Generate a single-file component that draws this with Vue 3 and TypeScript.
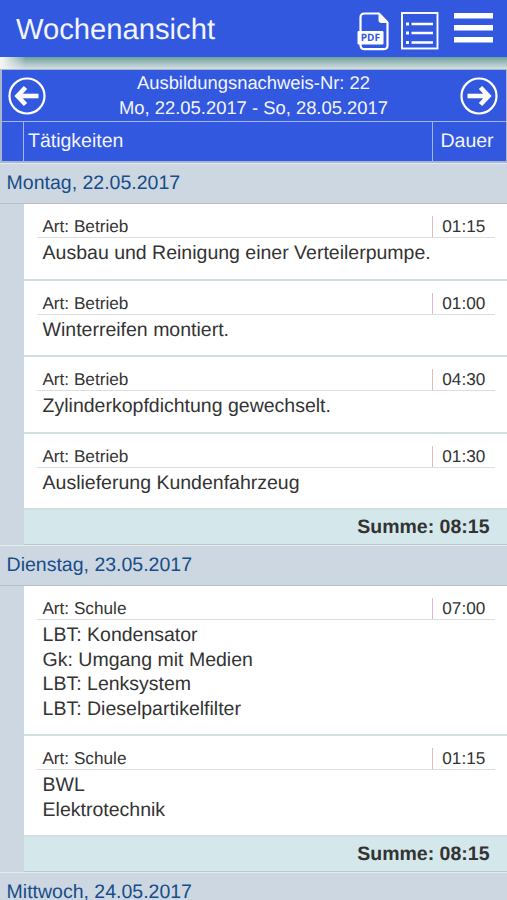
<script setup lang="ts">
interface Entry {
  kind: string
  duration: string
  lines: string[]
}

interface Day {
  label: string
  entries: Entry[]
  total: string
}

const days: Day[] = [
  {
    label: 'Montag, 22.05.2017',
    entries: [
      { kind: 'Betrieb', duration: '01:15', lines: ['Ausbau und Reinigung einer Verteilerpumpe.'] },
      { kind: 'Betrieb', duration: '01:00', lines: ['Winterreifen montiert.'] },
      { kind: 'Betrieb', duration: '04:30', lines: ['Zylinderkopfdichtung gewechselt.'] },
      { kind: 'Betrieb', duration: '01:30', lines: ['Auslieferung Kundenfahrzeug'] },
    ],
    total: '08:15',
  },
  {
    label: 'Dienstag, 23.05.2017',
    entries: [
      {
        kind: 'Schule',
        duration: '07:00',
        lines: ['LBT: Kondensator', 'Gk: Umgang mit Medien', 'LBT: Lenksystem', 'LBT: Dieselpartikelfilter'],
      },
      { kind: 'Schule', duration: '01:15', lines: ['BWL', 'Elektrotechnik'] },
    ],
    total: '08:15',
  },
  { label: 'Mittwoch, 24.05.2017', entries: [], total: '' },
]
</script>

<template>
  <div class="screen">
    <header class="topbar">
      <h1>Wochenansicht</h1>
      <div class="actions">
        <svg class="pdf" width="34" height="42" viewBox="0 0 34 42" fill="none">
          <path d="M3.5 21V6.5Q3.5 2.5 7.5 2.5H22L30.5 11.5V34.5Q30.5 38.2 26.5 38.2H7.5Q3.5 38.2 3.5 34V31" stroke="#fff" stroke-width="2.2" />
          <path d="M21.5 2L31 12H24.5Q21.5 12 21.5 9Z" fill="#fff" />
          <rect x="0.5" y="20" width="26" height="13.5" rx="1" fill="#fff" />
          <text x="13.3" y="30.3" text-anchor="middle" class="pdf-label">PDF</text>
        </svg>
        <svg class="list" width="38" height="38" viewBox="0 0 38 38" fill="none" stroke="#fff">
          <rect x="1" y="1" width="35.5" height="35.5" stroke-width="1.9" />
          <path d="M10.5 12H32M10.5 21H32M10.5 30.5H32" stroke-width="2.6" />
          <path d="M5 12H8M5 21H8M5 30.5H8" stroke-width="3" />
        </svg>
        <svg class="menu" width="39" height="31" viewBox="0 0 39 31" fill="#fff">
          <rect width="39" height="5.5" y="0" />
          <rect width="39" height="5.5" y="12" />
          <rect width="39" height="5.5" y="24" />
        </svg>
      </div>
    </header>
    <div class="shadow-strip"><div class="shadow"></div></div>

    <section class="head">
      <div class="week">
        <svg width="38" height="38" viewBox="0 0 38 38" fill="none" stroke="#fff">
          <circle cx="19" cy="19" r="17.5" stroke-width="2.2" />
          <path d="M30.5 19H10" stroke-width="4.6" />
          <path d="M17.5 10.5L9.5 19L17.5 27.5" stroke-width="4.6" />
        </svg>
        <div class="week-text">
          <div>Ausbildungsnachweis-Nr: 22</div>
          <div>Mo, 22.05.2017 - So, 28.05.2017</div>
        </div>
        <svg width="38" height="38" viewBox="0 0 38 38" fill="none" stroke="#fff">
          <circle cx="19" cy="19" r="17.5" stroke-width="2.2" />
          <path d="M7.5 19H28" stroke-width="4.6" />
          <path d="M20.5 10.5L28.5 19L20.5 27.5" stroke-width="4.6" />
        </svg>
      </div>
      <div class="columns">
        <span></span>
        <span>Tätigkeiten</span>
        <span>Dauer</span>
      </div>
    </section>

    <section v-for="day in days" :key="day.label" class="day">
      <h2>{{ day.label }}</h2>
      <div v-if="day.entries.length" class="day-body">
        <article v-for="(entry, i) in day.entries" :key="i" class="entry">
          <div class="meta">
            <span>Art: {{ entry.kind }}</span>
            <span class="time">{{ entry.duration }}</span>
          </div>
          <div class="text">
            <div v-for="line in entry.lines" :key="line">{{ line }}</div>
          </div>
        </article>
        <div class="sum">Summe: {{ day.total }}</div>
      </div>
    </section>
  </div>
</template>

<style>
body {
  overflow: hidden;
}
</style>

<style scoped>
.screen {
  box-sizing: border-box;
  height: 900px;
  overflow: hidden;
  background: #ccd7e1;
  font-family: "Liberation Sans", Arial, sans-serif;
  font-size: 19.5px;
  color: #333;
  text-rendering: geometricPrecision;
}
.screen * {
  box-sizing: border-box;
}
.screen svg {
  display: block;
  flex: none;
}
.topbar {
  height: 57px;
  padding: 0 14px 0 16px;
  display: flex;
  justify-content: space-between;
  background: #3358e0;
}
h1 {
  margin: 0;
  font-size: 29.2px;
  font-weight: 400;
  line-height: 60px;
  color: #f2f5ff;
}
.actions {
  display: flex;
}
.pdf {
  margin-top: 11px;
}
.pdf-label {
  font: 700 10px "Open Sans", sans-serif;
  fill: #3358e0;
}
.list {
  margin: 12px 0 0 10px;
}
.menu {
  margin: 13px 0 0 15px;
}
.shadow-strip {
  height: 12px;
  background: #f3f4f2;
}
.shadow {
  height: 12px;
  background: linear-gradient(#6f9f9f, #9fbdbd 45%, #d3dfdf);
  mask-image: linear-gradient(100deg, transparent 3px, #000 26px);
}
.head {
  border: solid #a9b6d2;
  border-width: 1px 1px 2px 2px;
  background: #3358e0;
  color: #f2f5ff;
}
.week {
  height: 52px;
  padding: 0 8px 0 6px;
  display: flex;
  justify-content: space-between;
  align-items: center;
  border-bottom: 1px solid #a3b4e8;
}
.week-text {
  padding-left: 1px;
  font-size: 18.4px;
  line-height: 24.4px;
  text-align: center;
}
.columns {
  height: 39px;
  display: grid;
  grid-template-columns: 21px 409px 1fr;
  line-height: 38px;
}
.columns span {
  padding-left: 4px;
}
.columns span + span {
  border-left: 1px solid #a3b4e8;
}
.columns span:last-child {
  padding-left: 7.5px;
}
.day h2 {
  height: 41px;
  margin: 0;
  padding-left: 6.6px;
  border-top: 1px solid #e4ebef;
  border-bottom: 1px solid #b6bec5;
  font-size: 19.5px;
  font-weight: 400;
  line-height: 38px;
  color: #174d88;
}
.day-body {
  margin-left: 24px;
}
.entry {
  padding: 12px 12px 13px 13px;
  border-bottom: 2px solid #d0dfe2;
  background: #fff;
}
.meta {
  height: 22px;
  display: flex;
  justify-content: space-between;
  border-bottom: 1px solid #dedede;
  padding-left: 5.4px;
  font-size: 17.2px;
  line-height: 20px;
}
.time {
  width: 63px;
  padding-left: 9.3px;
  border-left: 1px solid #dfb9c3;
}
.text {
  padding: 3px 0 0 5.6px;
  line-height: 24.5px;
}
.sum {
  height: 35px;
  padding-right: 17.5px;
  border-bottom: 1px solid #bcc9cc;
  background: #d4e8eb;
  font-weight: 700;
  line-height: 34px;
  text-align: right;
}
</style>
